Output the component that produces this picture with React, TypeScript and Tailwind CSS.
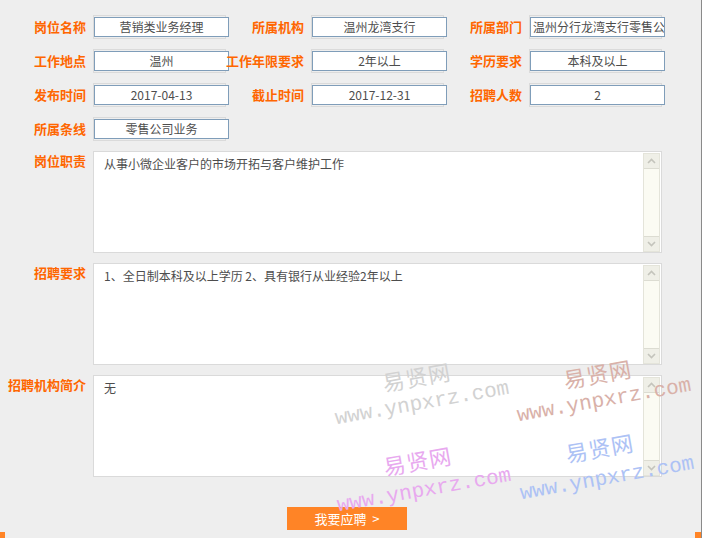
import React from "react";

const FONT = { fontFamily: '"Noto Sans CJK SC", "Liberation Sans", sans-serif' };

const ROWS: [string, string][][] = [
  [["岗位名称", "营销类业务经理"], ["所属机构", "温州龙湾支行"], ["所属部门", "温州分行龙湾支行零售公司业务部"]],
  [["工作地点", "温州"], ["工作年限要求", "2年以上"], ["学历要求", "本科及以上"]],
  [["发布时间", "2017-04-13"], ["截止时间", "2017-12-31"], ["招聘人数", "2"]],
  [["所属条线", "零售公司业务"]],
];

const AREAS: [string, string][] = [
  ["岗位职责", "从事小微企业客户的市场开拓与客户维护工作"],
  ["招聘要求", "1、全日制本科及以上学历 2、具有银行从业经验2年以上"],
  ["招聘机构简介", "无"],
];

// watermark sets: [left, top] of 易贤网, [left, top] of url, colour
const MARKS = [
  { cn: "left-[382px] top-[364px]", url: "left-[334px] top-[393px]", color: "text-[#d2d2d2]" },
  { cn: "left-[563px] top-[361px]", url: "left-[516px] top-[390px]", color: "text-[#d9b1a9]" },
  { cn: "left-[383px] top-[448px]", url: "left-[336px] top-[480px]", color: "text-[#e8a9ef]" },
  { cn: "left-[565px] top-[435px]", url: "left-[519px] top-[468px]", color: "text-[#adc2f5]" },
];

function Field({ label, value }: { label: string; value: string }) {
  return (
    <div className="flex w-[218px] shrink-0 items-center">
      <div className="w-[86px] shrink-0 text-right text-[13px] leading-[16px] font-bold text-[#ff6600] whitespace-nowrap">{label}</div>
      <div className="ml-[7px] w-[133px] h-[24px] shrink-0 border border-[#dadada]">
        <div className="mt-px w-[135px] h-[20px] border border-[#7f9db9] bg-white px-[2px] text-center text-[12px] leading-[18px] text-[#4d4d4d] overflow-hidden whitespace-nowrap">
          {value}
        </div>
      </div>
    </div>
  );
}

function Chevron({ up }: { up?: boolean }) {
  return (
    <svg width="9" height="6" viewBox="0 0 9 6">
      <polyline
        points={up ? "1,5 4.5,1.5 8,5" : "1,1 4.5,4.5 8,1"}
        fill="none"
        stroke="#c4c4bc"
        strokeWidth="1.6"
      />
    </svg>
  );
}

function Area({ label, text }: { label: string; text: string }) {
  return (
    <div className="flex items-start">
      <div className="w-[86px] shrink-0 pt-[2px] text-right text-[13px] leading-[16px] font-bold text-[#ff6600] whitespace-nowrap">{label}</div>
      <div className="ml-[7px] w-[569px] h-[102px] shrink-0 border border-[#dadada] bg-white flex">
        <div className="flex-1 pl-[10px] pt-[4px] text-[12px] leading-[16px] text-[#4d4d4d]">{text}</div>
        <div className="mr-px mt-px w-[17px] border border-[#e4e4da] bg-[#fbfbf3] flex flex-col justify-between">
          <div className="h-[15px] bg-[#efefe7] border-b border-[#dcdcd2] flex items-center justify-center">
            <Chevron up />
          </div>
          <div className="h-[15px] bg-[#efefe7] border-t border-[#dcdcd2] flex items-center justify-center">
            <Chevron />
          </div>
        </div>
      </div>
    </div>
  );
}

export default function App() {
  return (
    <div className="relative w-[702px] h-[538px] bg-[#eeeeee] border-r border-[#8a8a8a] overflow-hidden" style={FONT}>
      <div className="pt-[15px] flex flex-col gap-[10px]">
        {ROWS.map((row, i) => (
          <div key={i} className="flex">
            {row.map(([l, v]) => (
              <Field key={l} label={l} value={v} />
            ))}
          </div>
        ))}
        {AREAS.map(([l, t]) => (
          <Area key={l} label={l} text={t} />
        ))}
      </div>

      <button
        type="button"
        className="ml-[287px] mt-[30px] w-[120px] h-[23px] bg-[#ff8426] text-white text-[13px] flex items-center justify-center whitespace-pre"
      >
        我要应聘  &gt;
      </button>

      {/* watermark overlay */}
      {MARKS.map((m, i) => (
        <React.Fragment key={i}>
          <div className={`pointer-events-none absolute ${m.cn} ${m.color} -rotate-[10deg] text-[22px] leading-[24px] tracking-[1px]`}>
            易贤网
          </div>
          <div
            className={`pointer-events-none absolute ${m.url} ${m.color} -rotate-[10deg] text-[21px] leading-[22px] whitespace-nowrap`}
            style={{ fontFamily: '"Liberation Mono", monospace' }}
          >
            www.ynpxrz.com
          </div>
        </React.Fragment>
      ))}

      {/* frame bits */}
      <div className="absolute right-[-1px] top-[39px] w-px h-[26px] bg-[#8b5a2b]" />
      <div className="absolute left-0 bottom-0 w-[5px] h-[6px] bg-[#ff8426]" />
      <div className="absolute right-[-1px] bottom-0 w-[7px] h-[6px] bg-[#ff8426]" />
    </div>
  );
}
